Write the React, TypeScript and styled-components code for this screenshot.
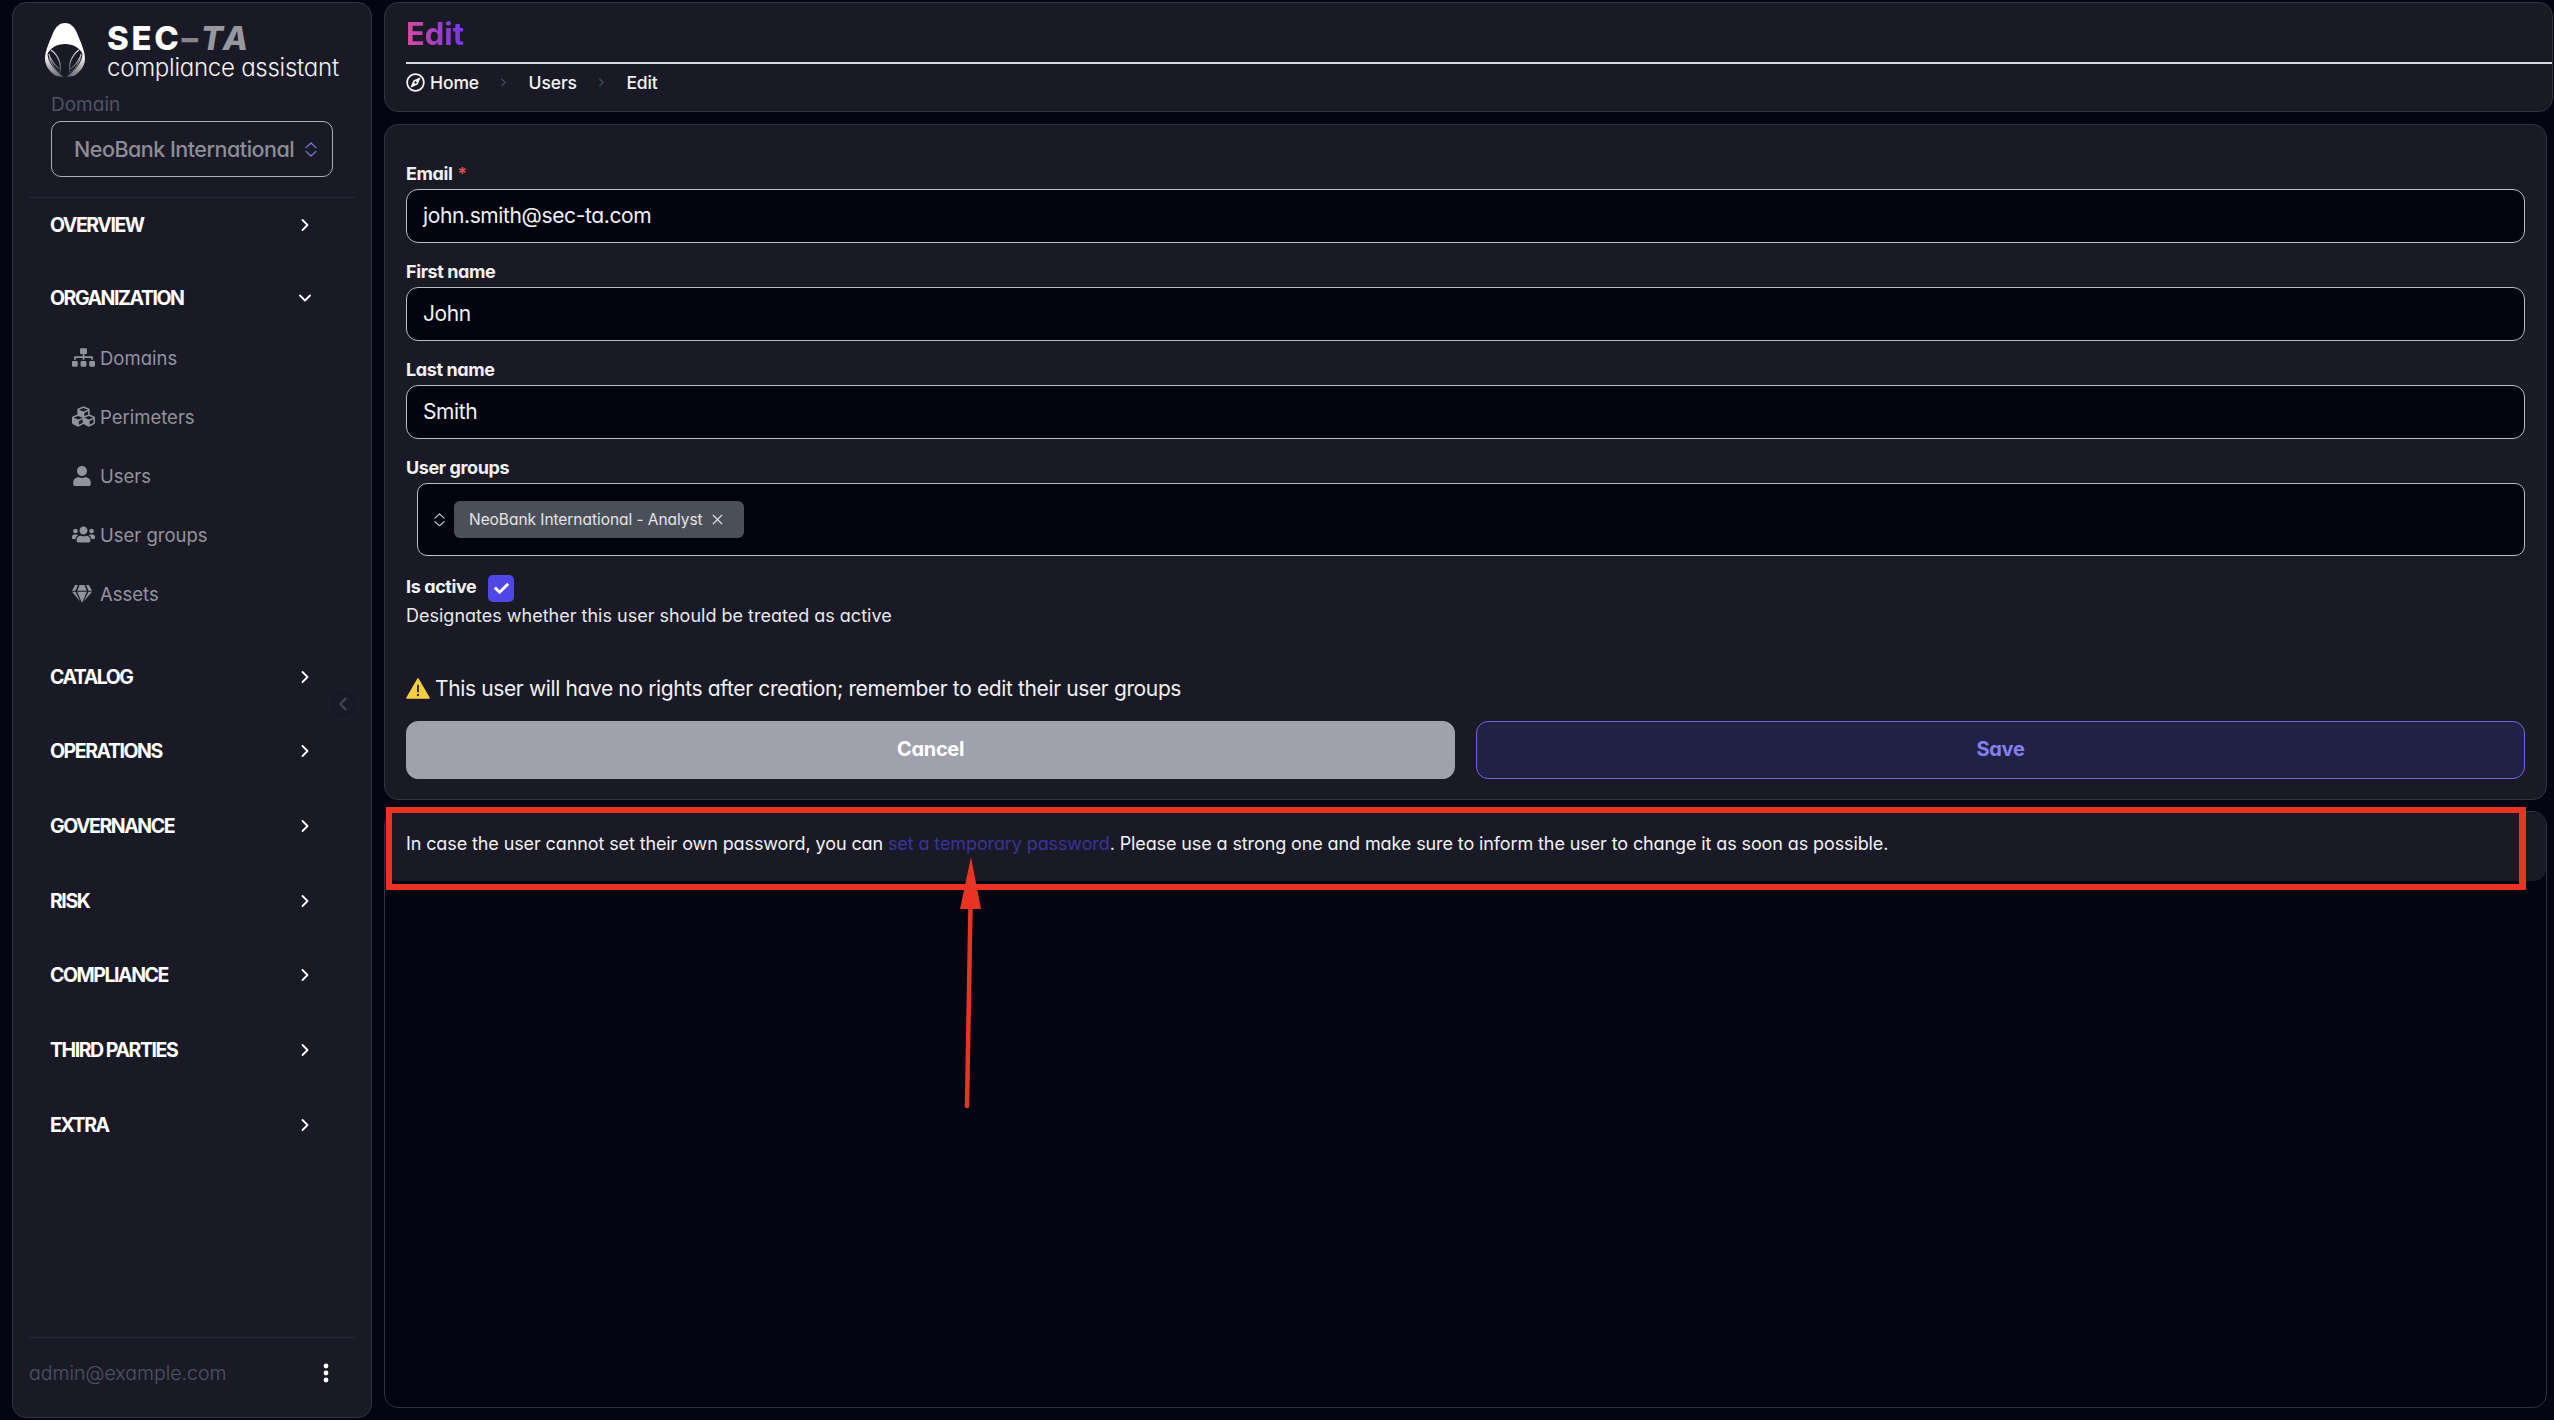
import { createGlobalStyle, styled } from "styled-components";
import { ChevronDown, ChevronLeft, ChevronRight, X } from "lucide-react";
import { FaCheck, FaCubes, FaGem, FaRegCompass, FaSitemap, FaUser, FaUsers } from "react-icons/fa";

const GlobalStyle = createGlobalStyle`
  html, body {
    margin: 0;
    padding: 0;
    background: #040412;
  }
  body {
    font-family: Inter, "Liberation Sans", sans-serif;
    font-feature-settings: "cv11" 1;
    color: #fff;
  }
  * {
    box-sizing: border-box;
  }
`;

const Page = styled.div`
  position: relative;
  display: flex;
  gap: 12px;
  width: 2554px;
  height: 1420px;
  padding: 2px 1px 0 12px;
  overflow: hidden;
  background: #040412;
`;

const Sidebar = styled.aside`
  position: relative;
  display: flex;
  flex-direction: column;
  flex: 0 0 360px;
  height: 1416px;
  padding: 0 16px;
  background: #1a1a27;
  border: 1px solid #33333f;
  border-radius: 14px;
`;

const Brand = styled.div`
  display: flex;
  align-items: flex-start;
  gap: 22px;
  height: 88px;
  padding: 20px 0 0 16px;
`;

const BrandText = styled.div`
  display: flex;
  flex-direction: column;
  margin-top: -1px;
`;

const BrandName = styled.div`
  font-size: 33px;
  line-height: 32px;
  font-weight: 800;
  letter-spacing: 2.7px;
  white-space: nowrap;
  color: #fff;
  em {
    font-style: italic;
    color: #97979d;
  }
  span {
    color: #85858b;
  }
`;

const BrandSub = styled.div`
  font-size: 24px;
  line-height: 27px;
  font-weight: 300;
  letter-spacing: -0.25px;
  white-space: nowrap;
  color: #f1f1f3;
`;

const DomainLabel = styled.div`
  margin: 0 0 3px 22px;
  height: 27px;
  font-size: 19px;
  line-height: 27px;
  color: #4b5563;
`;

const DomainSelect = styled.div`
  display: flex;
  align-items: center;
  justify-content: space-between;
  margin-left: 22px;
  width: 282px;
  height: 56px;
  padding: 0 15px 0 22px;
  border: 1px solid #aeaeb8;
  border-radius: 10px;
  font-size: 21.5px;
  font-weight: 500;
  letter-spacing: -0.5px;
  white-space: nowrap;
  color: #8d8d95;
`;

const Rule = styled.div`
  height: 1px;
  background: #25253c;
`;

const SidebarRule = styled(Rule)`
  margin-top: 20px;
`;

const Nav = styled.nav`
  display: flex;
  flex-direction: column;
`;

const NavHead = styled.div<{ $gap: number }>`
  display: flex;
  align-items: center;
  justify-content: space-between;
  height: 54px;
  padding: 0 40px 0 21px;
  margin-top: ${(p) => p.$gap}px;
  font-size: 19.5px;
  font-weight: 700;
  letter-spacing: -1.45px;
  color: #fff;
  svg {
    flex: none;
  }
`;

const SubList = styled.div`
  display: flex;
  flex-direction: column;
  margin-top: 3px;
`;

const SubItem = styled.div`
  display: flex;
  align-items: center;
  gap: 5px;
  height: 59px;
  padding-left: 43px;
  font-size: 18.5px;
  color: #93939b;
`;

const SubIcon = styled.span`
  display: flex;
  justify-content: flex-start;
  align-items: center;
  width: 23px;
`;

const SidebarFooter = styled.div`
  margin-top: auto;
`;

const FooterRow = styled.div`
  display: flex;
  align-items: center;
  justify-content: space-between;
  height: 79px;
  padding: 0 26px 10px 0;
  font-size: 19.5px;
  font-weight: 300;
  color: #4b5563;
`;

const Collapse = styled.div`
  position: absolute;
  top: 685px;
  left: 314px;
  display: flex;
  align-items: center;
  justify-content: center;
  width: 32px;
  height: 32px;
  border: 1px solid #20203a;
  border-radius: 50%;
  color: #414a5c;
`;

const Main = styled.main`
  display: flex;
  flex-direction: column;
  flex: 1;
  min-width: 0;
`;

const Header = styled.header`
  height: 110px;
  padding: 11px 0 0 21px;
  background: #1a1a27;
  border: 1px solid #33333f;
  border-radius: 14px;
`;

const Title = styled.h1`
  margin: 0;
  width: fit-content;
  height: 48px;
  font-size: 31px;
  line-height: 40px;
  font-weight: 700;
  background: linear-gradient(90deg, #d9499f, #7337e8);
  -webkit-background-clip: text;
  background-clip: text;
  color: transparent;
`;

const HeaderRule = styled.div`
  height: 2px;
  background: #d8d8e0;
`;

const Crumbs = styled.div`
  display: flex;
  align-items: center;
  height: 36px;
  font-size: 17.5px;
  font-weight: 500;
  letter-spacing: -0.1px;
  color: #f4f4f6;
`;

const CrumbHome = styled.span`
  display: flex;
  align-items: center;
  gap: 5px;
`;

const CrumbSep = styled.span`
  display: flex;
  justify-content: center;
  width: 49.5px;
  color: #414a5c;
`;

const FormCard = styled.section`
  display: flex;
  flex-direction: column;
  height: 676px;
  margin: 12px 6px 0 0;
  padding: 36px 21px 0;
  background: #1a1a27;
  border: 1px solid #33333f;
  border-radius: 14px;
`;

const Field = styled.div`
  display: flex;
  flex-direction: column;
  margin-bottom: 16px;
`;

const Label = styled.label`
  height: 24px;
  margin-bottom: 4px;
  font-size: 18px;
  line-height: 26px;
  font-weight: 700;
  letter-spacing: -0.4px;
  color: #f1f1f3;
`;

const Required = styled.span`
  margin-left: 5px;
  font-size: 17px;
  line-height: 0;
  color: #e04a4a;
`;

const Input = styled.div`
  display: flex;
  align-items: center;
  height: 54px;
  padding: 0 16px 2px;
  background: #03030f;
  border: 1px solid #bcbcc6;
  border-radius: 12px;
  font-size: 21px;
  letter-spacing: -0.38px;
  color: #f1f1f3;
`;

const GroupsBox = styled.div`
  display: flex;
  align-items: center;
  gap: 9px;
  height: 73px;
  margin-left: 11px;
  padding-left: 16px;
  background: #03030f;
  border: 1px solid #bcbcc6;
  border-radius: 10px;
  color: #d6d6da;
`;

const Chip = styled.span`
  display: inline-flex;
  align-items: center;
  justify-content: space-between;
  width: 290px;
  height: 37px;
  padding: 0 18px 0 15px;
  background: #4b5058;
  border-radius: 6px;
  font-size: 15.5px;
  letter-spacing: -0.05px;
  white-space: nowrap;
  color: #e4e4e8;
`;

const ActiveRow = styled.div`
  display: flex;
  align-items: flex-start;
  gap: 12px;
  height: 27px;
  margin-top: 3px;
  font-size: 18px;
  line-height: 23px;
  font-weight: 700;
  letter-spacing: -0.4px;
  color: #f1f1f3;
`;

const Checkbox = styled.span`
  display: flex;
  align-items: center;
  justify-content: center;
  width: 26px;
  height: 27px;
  background: #4f46e5;
  border-radius: 5px;
  color: #fff;
`;

const Help = styled.div`
  height: 20px;
  margin-top: 4px;
  font-size: 18px;
  line-height: 20px;
  color: #e8e8ec;
`;

const Warning = styled.div`
  display: flex;
  align-items: center;
  gap: 5px;
  height: 24px;
  margin-top: 50px;
  font-size: 21px;
  letter-spacing: -0.37px;
  color: #f1f1f3;
`;

const Actions = styled.div`
  display: grid;
  grid-template-columns: 1fr 1fr;
  gap: 21px;
  margin-top: 21px;
`;

const Button = styled.button<{ $primary?: boolean }>`
  height: 58px;
  padding-bottom: 3px;
  border-radius: 12px;
  border: 1px solid ${(p) => (p.$primary ? "#6d66e8" : "#9fa2ac")};
  background: ${(p) => (p.$primary ? "#212045" : "#9fa2ac")};
  color: ${(p) => (p.$primary ? "#8380f0" : "#fff")};
  font-family: inherit;
  font-feature-settings: inherit;
  font-size: 20px;
  font-weight: 700;
  letter-spacing: -0.3px;
`;

const NotePanel = styled.section`
  flex: 1;
  margin: 11px 6px 12px 0;
  background: #040412;
  border: 1px solid #33333f;
  border-radius: 14px;
  overflow: hidden;
`;

const Note = styled.p`
  margin: 0;
  height: 69px;
  padding: 21px 21px 0;
  background: #1a1a27;
  border-radius: 0 0 12px 12px;
  font-size: 18px;
  line-height: 22px;
  letter-spacing: -0.11px;
  color: #f1f1f3;
  a {
    color: #38339a;
    text-decoration: none;
  }
`;

const Callout = styled.div`
  position: absolute;
  top: 807px;
  left: 386px;
  width: 2140px;
  height: 83px;
  border: 6px solid #e93323;
  border-right-width: 7px;
  pointer-events: none;
`;

const Arrow = styled.svg`
  position: absolute;
  top: 855px;
  left: 955px;
`;

const groups = ["CATALOG", "OPERATIONS", "GOVERNANCE", "RISK", "COMPLIANCE", "THIRD PARTIES", "EXTRA"];

const orgItems = [
  { name: "Domains", icon: <FaSitemap size={23} /> },
  { name: "Perimeters", icon: <FaCubes size={23} /> },
  { name: "Users", icon: <FaUser size={20} /> },
  { name: "User groups", icon: <FaUsers size={25} /> },
  { name: "Assets", icon: <FaGem size={20} /> },
];

function UpDown({ color, size }: { color: string; size: number }) {
  return (
    <svg width={size} height={size * 1.25} viewBox="0 0 12 15" fill="none" stroke={color} strokeWidth="1.2" strokeLinecap="round" strokeLinejoin="round">
      <path d="M1 5.6 6 1l5 4.6" />
      <path d="M1 9.4 6 14l5-4.6" />
    </svg>
  );
}

function Kebab() {
  return (
    <svg width="6" height="20" viewBox="0 0 6 20" fill="#fff">
      <circle cx="3" cy="3" r="2.4" />
      <circle cx="3" cy="10" r="2.4" />
      <circle cx="3" cy="17" r="2.4" />
    </svg>
  );
}

function Logo() {
  return (
    <svg width="40" height="54" viewBox="0 0 40 54" fill="none">
      <defs>
        <linearGradient id="hood" x1="0" y1="0" x2="0" y2="1">
          <stop offset="0.6" stopColor="#fff" />
          <stop offset="1" stopColor="#6a6a72" />
        </linearGradient>
        <linearGradient id="leaf" x1="0" y1="0" x2="0" y2="1">
          <stop offset="0" stopColor="#e8e8ea" />
          <stop offset="1" stopColor="#3a3a44" />
        </linearGradient>
      </defs>
      <path d="M20 0C25 0 29 3 32 10C35 18 40 27 40 36C40 43 35 49 29 53L20 54L11 53C5 49 0 43 0 36C0 27 5 18 8 10C11 3 15 0 20 0Z" fill="url(#hood)" />
      <path d="M20 21C12 21 5 25 2.5 31C3 40 10 48 20 55C30 48 37 40 37.5 31C35 25 28 21 20 21Z" fill="#1a1a27" />
      <path d="M4 31C5 39 9 46 15 50C17 41 13 32 6 27M5 34C8 40 11 44 15 46" stroke="url(#leaf)" strokeWidth="1.2" />
      <path d="M36 31C35 39 31 46 25 50C23 41 27 32 34 27M35 34C32 40 29 44 25 46" stroke="url(#leaf)" strokeWidth="1.2" />
    </svg>
  );
}

function WarningIcon() {
  return (
    <svg width="24" height="21" viewBox="0 0 24 21">
      <path d="M12 1 23 20H1Z" fill="#f6cf45" stroke="#f6cf45" strokeWidth="1.5" strokeLinejoin="round" />
      <rect x="11" y="6.5" width="2" height="8" rx="1" fill="#3a3320" />
      <circle cx="12" cy="17" r="1.2" fill="#3a3320" />
    </svg>
  );
}

export default function App() {
  return (
    <>
      <GlobalStyle />
      <Page>
        <Sidebar>
          <Brand>
            <Logo />
            <BrandText>
              <BrandName>
                SEC<span>–</span>
                <em>TA</em>
              </BrandName>
              <BrandSub>compliance assistant</BrandSub>
            </BrandText>
          </Brand>
          <DomainLabel>Domain</DomainLabel>
          <DomainSelect>
            NeoBank International
            <UpDown color="#7a7fe0" size={12} />
          </DomainSelect>
          <SidebarRule />
          <Nav>
            <NavHead $gap={0}>
              OVERVIEW
              <ChevronRight size={20} strokeWidth={2.2} />
            </NavHead>
            <NavHead $gap={19}>
              ORGANIZATION
              <ChevronDown size={20} strokeWidth={2.2} />
            </NavHead>
            <SubList>
              {orgItems.map((item) => (
                <SubItem key={item.name}>
                  <SubIcon>{item.icon}</SubIcon>
                  {item.name}
                </SubItem>
              ))}
            </SubList>
            {groups.map((g, i) => (
              <NavHead key={g} $gap={i === 0 ? 26.5 : 20.7}>
                {g}
                <ChevronRight size={20} strokeWidth={2.2} />
              </NavHead>
            ))}
          </Nav>
          <SidebarFooter>
            <Rule />
            <FooterRow>
              admin@example.com
              <Kebab />
            </FooterRow>
          </SidebarFooter>
          <Collapse>
            <ChevronLeft size={22} strokeWidth={2} />
          </Collapse>
        </Sidebar>
        <Main>
          <Header>
            <Title>Edit</Title>
            <HeaderRule />
            <Crumbs>
              <CrumbHome>
                <FaRegCompass size={19} />
                Home
              </CrumbHome>
              <CrumbSep>
                <ChevronRight size={13} strokeWidth={2.4} />
              </CrumbSep>
              Users
              <CrumbSep>
                <ChevronRight size={13} strokeWidth={2.4} />
              </CrumbSep>
              Edit
            </Crumbs>
          </Header>
          <FormCard>
            <Field>
              <Label>
                Email<Required>*</Required>
              </Label>
              <Input>john.smith@sec-ta.com</Input>
            </Field>
            <Field>
              <Label>First name</Label>
              <Input>John</Input>
            </Field>
            <Field>
              <Label>Last name</Label>
              <Input>Smith</Input>
            </Field>
            <Field>
              <Label>User groups</Label>
              <GroupsBox>
                <UpDown color="#d6d6da" size={11} />
                <Chip>
                  NeoBank International - Analyst
                  <X size={17} strokeWidth={1.6} />
                </Chip>
              </GroupsBox>
            </Field>
            <ActiveRow>
              Is active
              <Checkbox>
                <FaCheck size={15} />
              </Checkbox>
            </ActiveRow>
            <Help>Designates whether this user should be treated as active</Help>
            <Warning>
              <WarningIcon />
              This user will have no rights after creation; remember to edit their user groups
            </Warning>
            <Actions>
              <Button>Cancel</Button>
              <Button $primary>Save</Button>
            </Actions>
          </FormCard>
          <NotePanel>
            <Note>
              In case the user cannot set their own password, you can <a href="#temp">set a temporary password</a>. Please use a strong one and make sure to inform the user to change it as soon as possible.
            </Note>
          </NotePanel>
        </Main>
        <Callout />
        <Arrow width="36" height="255" viewBox="0 0 36 255" fill="none">
          <path d="M15.5 50 12 251" stroke="#e93323" strokeWidth="4.5" strokeLinecap="round" />
          <path d="M16 2 5 54H26Z" fill="#e93323" />
        </Arrow>
      </Page>
    </>
  );
}
